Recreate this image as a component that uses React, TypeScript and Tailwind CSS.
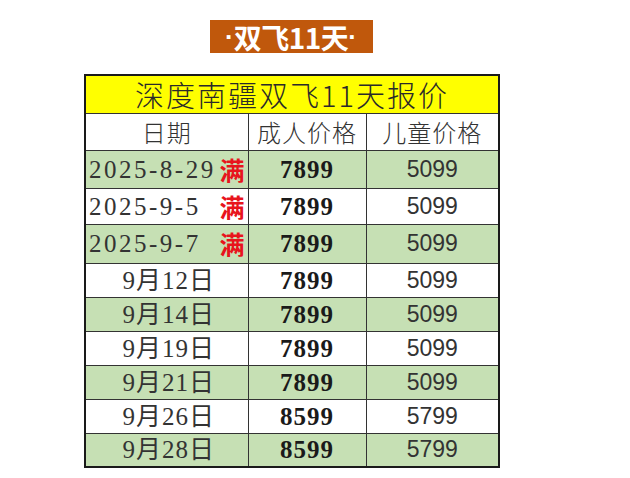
const rows = [
  { date: "2025-8-29", full: true, adult: "7899", child: "5099", green: true, h: "h-[38px]" },
  { date: "2025-9-5", full: true, adult: "7899", child: "5099", green: false, h: "h-[36px]" },
  { date: "2025-9-7", full: true, adult: "7899", child: "5099", green: true, h: "h-[39px]" },
  { date: "9月12日", full: false, adult: "7899", child: "5099", green: false, h: "h-[34px]" },
  { date: "9月14日", full: false, adult: "7899", child: "5099", green: true, h: "h-[34px]" },
  { date: "9月19日", full: false, adult: "7899", child: "5099", green: false, h: "h-[34px]" },
  { date: "9月21日", full: false, adult: "7899", child: "5099", green: true, h: "h-[34px]" },
  { date: "9月26日", full: false, adult: "8599", child: "5799", green: false, h: "h-[34px]" },
  { date: "9月28日", full: false, adult: "8599", child: "5799", green: true, h: "h-[34px]" },
];

const serif = "font-['Liberation_Serif','Noto_Sans_CJK_SC',serif]";
const cjk = "font-['Noto_Sans_CJK_SC',sans-serif]";
const cell = "border border-[#333]";

export default function App() {
  return (
    <div className="bg-white w-[630px] h-[478px] pt-[20px]">
      <div className="ml-[84px] w-[414px]">
        <div className="flex justify-center">
          <div className="flex w-[163px] h-[33px] items-center justify-center whitespace-nowrap bg-[#c0580c] text-white font-bold">
            <span className="text-[26px] leading-none font-['Liberation_Sans',sans-serif]">·</span>
            <span className={`text-[28px] leading-none tracking-[-0.5px] ${cjk}`}>双飞11天</span>
            <span className="text-[26px] leading-none font-['Liberation_Sans',sans-serif]">·</span>
          </div>
        </div>

        <table className="mt-[21px] w-[414px] border-collapse border-2 border-[#1a1a1a] table-fixed">
          <colgroup>
            <col className="w-[163px]" />
            <col className="w-[118px]" />
            <col className="w-[133px]" />
          </colgroup>
          <tbody>
            <tr className="h-[38px] bg-[#ffff00]">
              <td
                colSpan={3}
                className={`${cell} text-center text-[29px] leading-none tracking-[2px] text-[#2a2a2a] whitespace-nowrap ${cjk} font-light`}
              >
                深度南疆双飞11天报价
              </td>
            </tr>
            <tr className="h-[37px] bg-white">
              <td className={`${cell} text-center text-[24px] leading-none tracking-[1px] text-[#333] ${cjk} font-light`}>
                日期
              </td>
              <td className={`${cell} text-center text-[24px] leading-none tracking-[1px] text-[#333] ${cjk} font-light`}>
                成人价格
              </td>
              <td className={`${cell} text-center text-[24px] leading-none tracking-[1px] text-[#333] ${cjk} font-light`}>
                儿童价格
              </td>
            </tr>
            {rows.map((r) => (
              <tr key={r.date} className={`${r.h} ${r.green ? "bg-[#c6e0b4]" : "bg-white"}`}>
                <td className={`${cell} p-0`}>
                  {r.full ? (
                    <div className="flex items-center justify-between whitespace-nowrap pl-[3px] pr-[3px]">
                      <span className={`text-[25px] leading-none tracking-[2.5px] text-[#333] ${serif}`}>
                        {r.date}
                      </span>
                      <span className={`text-[25px] leading-none font-bold text-[#e8141c] ${cjk}`}>满</span>
                    </div>
                  ) : (
                    <div className="flex items-center justify-center pl-[4px]">
                      <span className={`text-[25px] leading-none tracking-[1px] text-[#333] whitespace-nowrap ${serif}`}>
                        {r.date}
                      </span>
                    </div>
                  )}
                </td>
                <td className={`${cell} text-center text-[25px] leading-none font-bold tracking-[1px] text-[#1a1a1a] ${serif}`}>
                  {r.adult}
                </td>
                <td className={`${cell} text-center text-[23px] leading-none text-[#333] font-['Liberation_Sans',sans-serif]`}>
                  {r.child}
                </td>
              </tr>
            ))}
          </tbody>
        </table>
      </div>
    </div>
  );
}
